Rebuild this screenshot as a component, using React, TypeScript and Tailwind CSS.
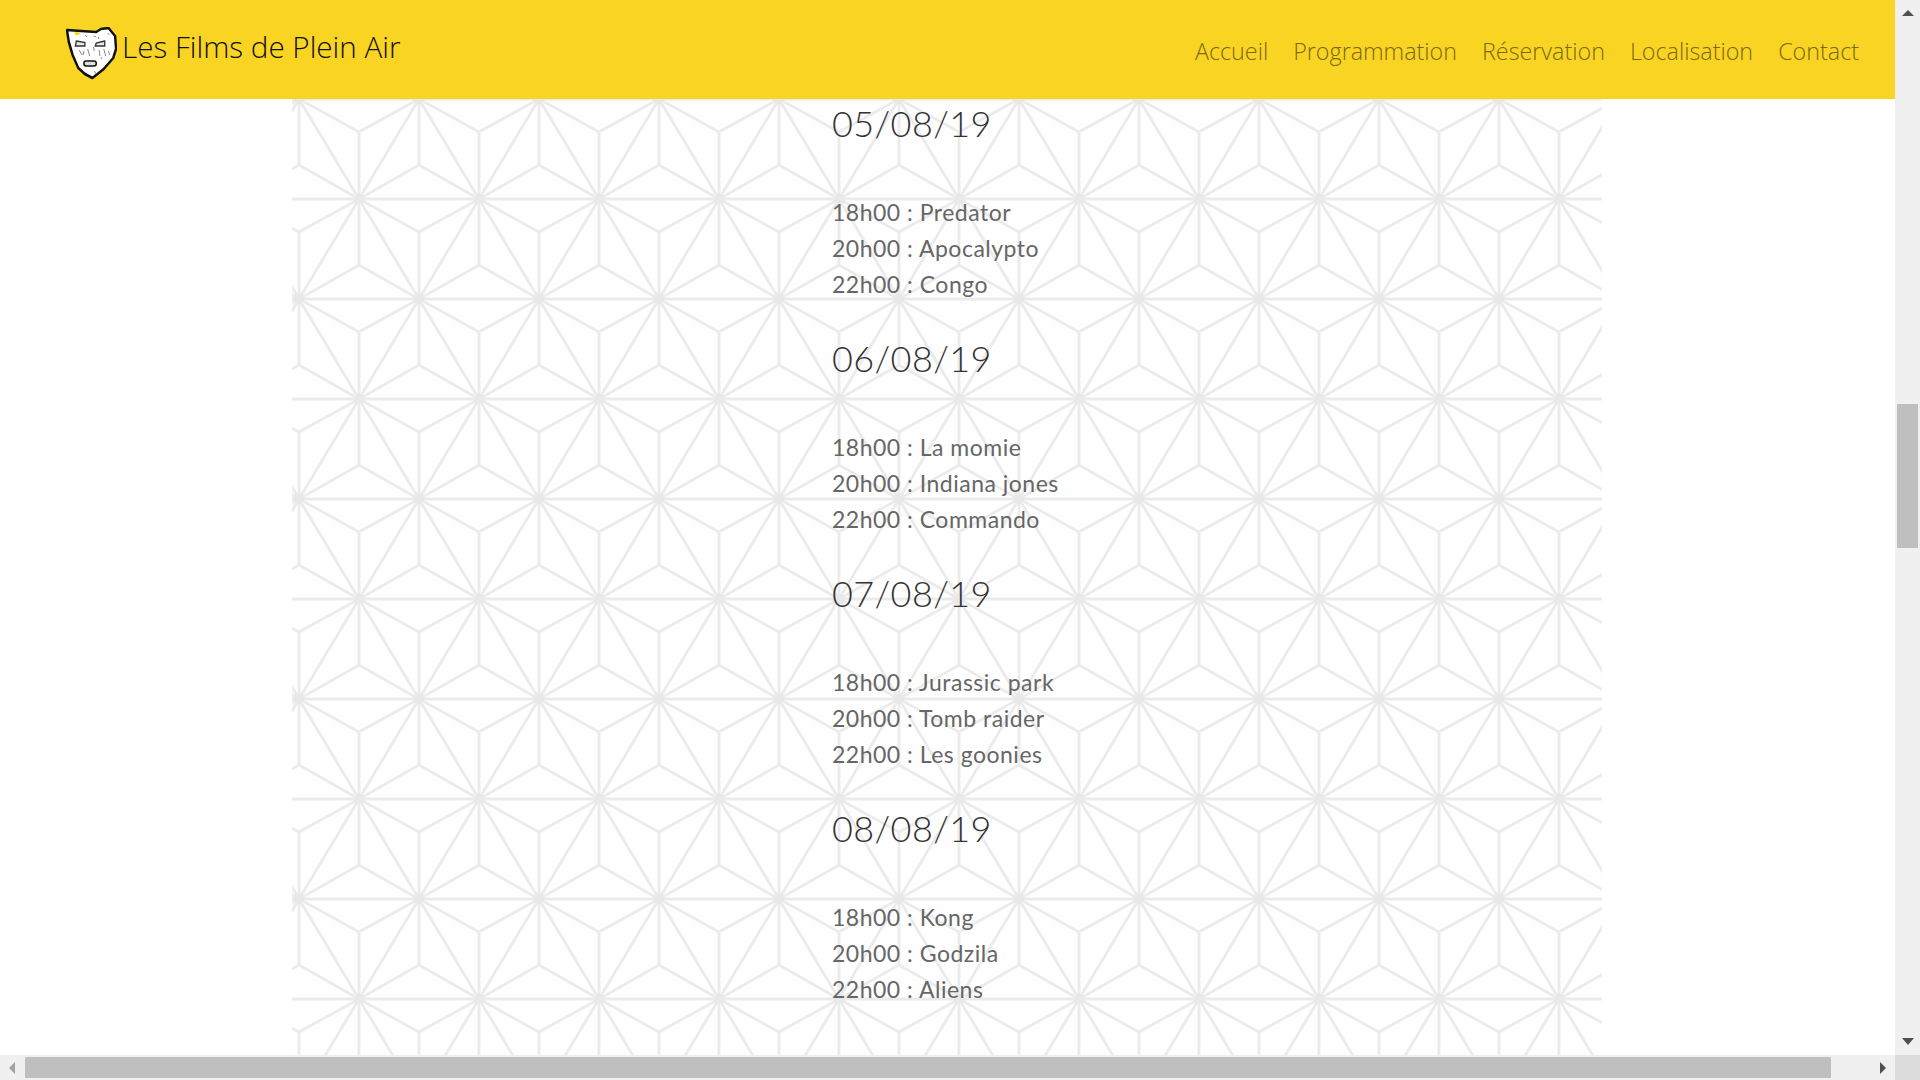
import React from "react";

const program = [
  { date: "05/08/19", films: ["18h00 : Predator", "20h00 : Apocalypto", "22h00 : Congo"] },
  { date: "06/08/19", films: ["18h00 : La momie", "20h00 : Indiana jones", "22h00 : Commando"] },
  { date: "07/08/19", films: ["18h00 : Jurassic park", "20h00 : Tomb raider", "22h00 : Les goonies"] },
  { date: "08/08/19", films: ["18h00 : Kong", "20h00 : Godzila", "22h00 : Aliens"] },
];

const links = ["Accueil", "Programmation", "Réservation", "Localisation", "Contact"];

// asanoha background, one tile is 120x200
function Pattern() {
  const lines = [
    "M0 0L120 0M0 200L120 200M0 100L120 100",
    "M0 0L0 66M120 0L120 66M0 200L0 133M120 200L120 133",
    "M60 100L60 33M60 100L60 166",
    "M60 100L0 0M60 100L120 0M60 100L0 200M60 100L120 200",
    "M60 100L0 66M60 100L120 66M60 100L0 133M60 100L120 133",
    "M0 0L60 33L120 0M0 200L60 166L120 200",
  ].join("");
  return (
    <svg className="absolute inset-0 h-full w-full blur-[0.7px]">
      <defs>
        <pattern id="asanoha" x="7" y="0" width="120" height="200" patternUnits="userSpaceOnUse">
          <path d={lines} fill="none" stroke="#ebebeb" strokeWidth="2.8" />
          <circle cx="60" cy="100" r="5" fill="#e8e8e8" />
          <circle cx="0" cy="0" r="5" fill="#e8e8e8" />
          <circle cx="120" cy="0" r="5" fill="#e8e8e8" />
          <circle cx="0" cy="200" r="5" fill="#e8e8e8" />
          <circle cx="120" cy="200" r="5" fill="#e8e8e8" />
        </pattern>
      </defs>
      <rect width="100%" height="100%" fill="url(#asanoha)" />
    </svg>
  );
}

function Logo() {
  return (
    <svg width="51" height="54" viewBox="0 0 54 54" preserveAspectRatio="none" className="shrink-0">
      <path
        d="M1 3L16 4L32 5L37 2L45 1L52 9L53 22L50 31L40 42L28 51L20 47L13 41L7 28L3 15Z"
        fill="#fff"
        stroke="#111"
        strokeWidth="2.6"
        strokeLinejoin="round"
      />
      <path d="M9 5L15 5.5L14 8L10 8Z" fill="#f9d423" />
      <path d="M11 14L20 15.5L20 19L10 19Z" fill="#e8e8e8" stroke="#333" strokeWidth="1.4" />
      <path d="M41 14L32 16L31 19L41 19Z" fill="#e8e8e8" stroke="#333" strokeWidth="1.4" />
      <rect x="19" y="34" width="13" height="5" rx="2.2" fill="#ddd" stroke="#111" strokeWidth="1.6" />
      <path
        d="M14 23L17 28M19 24L18 28M23 22L25 29M29 20L30 24M35 23L36 29M40 22L42 29M29 9L32 10M20 8L22 10M44 6L46 8M37 30L38 32M30 44L32 47M34 10L35 12M45 24L46 28"
        stroke="#777"
        strokeWidth="0.9"
      />
    </svg>
  );
}

function Header() {
  return (
    <header className="flex h-[99px] shrink-0 bg-[#f9d423] font-['Open_Sans',sans-serif]">
      <div className="ml-[66px] mt-[27px] flex h-[54px] items-start">
        <Logo />
        <span className="ml-[5px] -mt-[3px] text-[29.6px] leading-[46px] font-light text-[#111]">
          Les Films de Plein Air
        </span>
      </div>
      <nav className="ml-auto mr-[36px] mt-[33px] flex h-[36px] gap-[25px] text-[23.3px] leading-[36px] font-light text-[#7b6912]">
        {links.map((l) => (
          <a key={l}>{l}</a>
        ))}
      </nav>
    </header>
  );
}

function Arrow({ points, color, className }: { points: string; color: string; className: string }) {
  return (
    <svg viewBox="0 0 12 12" className={className}>
      <polygon points={points} fill={color} />
    </svg>
  );
}

export default function App() {
  return (
    <div className="flex h-[1080px] w-[1920px] flex-col overflow-hidden bg-white">
      <div className="flex h-[1055px]">
        <main className="flex w-[1895px] flex-col overflow-hidden">
          <Header />
          <section className="relative ml-[292px] h-[956px] w-[1310px] overflow-hidden bg-[#fefefe] pl-[540px]">
            <Pattern />
            <div className="relative font-['Lato',sans-serif]">
              {program.map((day) => (
                <div key={day.date} className="pb-8">
                  <h2 className="mb-[47px] h-[48px] text-[36px] leading-[48px] font-light tracking-[0.4px] text-[#333]">
                    {day.date}
                  </h2>
                  {day.films.map((f) => (
                    <p key={f} className="text-[23px] leading-9 tracking-[0.5px] text-[#666]">
                      {f}
                    </p>
                  ))}
                </div>
              ))}
            </div>
          </section>
        </main>
        <div className="flex w-[25px] flex-col items-center bg-[#f0f0f0]">
          <Arrow points="0,7 6,1 12,7" color="#505050" className="mt-[9px] h-3 w-3" />
          <div className="mt-[383px] h-[144px] w-[21px] bg-[#bfbfbf]" />
          <Arrow points="0,2 12,2 6,9" color="#505050" className="mt-[488px] h-3 w-3" />
        </div>
      </div>
      <div className="flex h-[25px]">
        <div className="flex w-[1895px] items-center bg-[#f0f0f0]">
          <Arrow points="9,0 9,12 3,6" color="#a3a3a3" className="ml-[6px] h-3 w-3" />
          <div className="ml-[7px] h-[21px] w-[1806px] bg-[#bfbfbf]" />
          <Arrow points="3,0 3,12 9,6" color="#505050" className="ml-[46px] h-3 w-3" />
        </div>
        <div className="w-[25px] bg-[#dcdcdc]" />
      </div>
    </div>
  );
}
